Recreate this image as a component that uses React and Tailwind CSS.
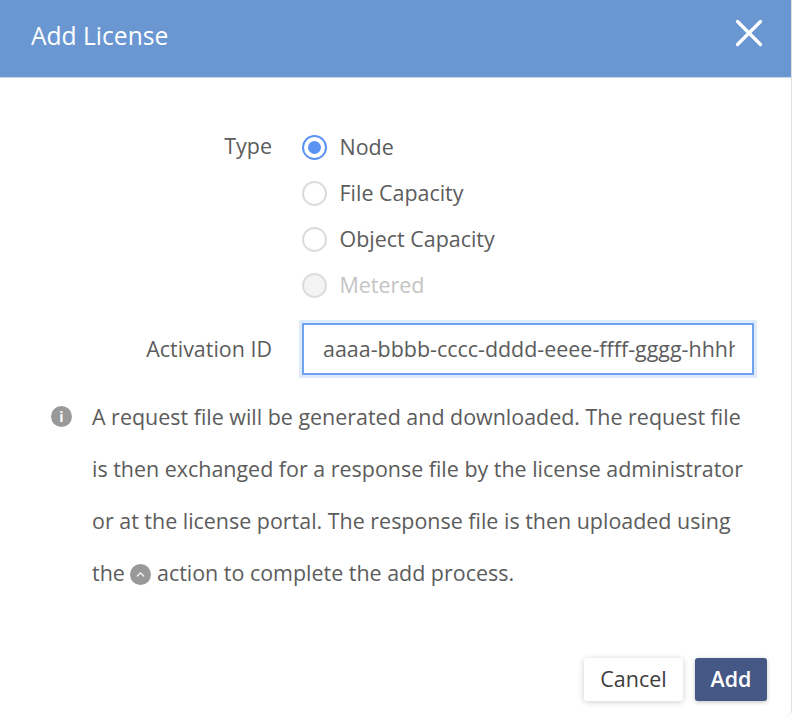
import { X, ChevronUp } from 'lucide-react';

const Radio = ({ label, checked = false, disabled = false }) => (
  <div className="flex h-[46px] items-center">
    <span
      className={`flex h-[25px] w-[25px] items-center justify-center rounded-full border-2 ${
        checked ? 'border-[#5b93f5]' : 'border-[#dcdcdc]'
      } ${disabled ? 'bg-[#f3f3f3]' : 'bg-white'}`}
    >
      {checked && <span className="h-[13px] w-[13px] rounded-full bg-[#5b93f5]" />}
    </span>
    <span className={`ml-[12.5px] ${disabled ? 'text-[#c4c4c4]' : 'text-[#5c5c5c]'}`}>{label}</span>
  </div>
);

const App = () => {
  return (
    <div className="flex h-[717px] w-[792px] flex-col overflow-hidden rounded-br-lg border-r border-[#e0e0e0] bg-white font-['Open_Sans',sans-serif] text-[21.45px] text-[#5c5c5c]">
      <header className="flex h-[78px] flex-none items-start justify-between border-b border-[#c9d6e8] bg-[#6a97d2] pl-[31px] pr-[19px] text-white">
        <h1 className="mt-[19px] text-[24.6px] font-normal leading-[34px]">Add License</h1>
        <X size={46} strokeWidth={1.7} className="mt-[10px]" />
      </header>

      <div className="flex pt-[46px]">
        <div className="w-[272px] pt-[6px] text-right leading-[32px]">Type</div>
        <div className="ml-[30px]">
          <Radio label="Node" checked />
          <Radio label="File Capacity" />
          <Radio label="Object Capacity" />
          <Radio label="Metered" disabled />
        </div>
      </div>

      <div className="mt-[15px] flex items-center">
        <label className="w-[272px] text-right">Activation ID</label>
        <div className="ml-[30px] h-[52px] w-[452px] overflow-hidden border-2 border-[#6fa2ef] pl-[19px] pr-[17px] shadow-[0_0_0_3px_#dfeafb]">
          <div className="overflow-hidden whitespace-nowrap leading-[48px]">aaaa-bbbb-cccc-dddd-eeee-ffff-gggg-hhhh</div>
        </div>
      </div>

      <div className="mt-[16px] flex pl-[51px]">
        <span className="mt-[15px] flex h-[21px] w-[21px] flex-none items-center justify-center rounded-full bg-[#999999] text-[14px] font-bold leading-none text-white">
          i
        </span>
        <p className="ml-[20px] whitespace-nowrap leading-[52px]">
          A request file will be generated and downloaded. The request file
          <br />
          is then exchanged for a response file by the license administrator
          <br />
          or at the license portal. The response file is then uploaded using
          <br />
          the{' '}
          <span className="inline-flex h-[21px] w-[21px] items-center justify-center rounded-full bg-[#999999] align-[0px] text-white">
            <ChevronUp size={13} strokeWidth={2.5} />
          </span>{' '}
          action to complete the add process.
        </p>
      </div>

      <div className="mt-auto flex justify-end gap-[12px] pb-[16px] pr-[24px]">
        <button className="h-[43px] w-[99px] rounded-[3px] bg-white font-medium text-[#3c3c3c] shadow-[0_1px_6px_rgba(0,0,0,0.2)]">
          Cancel
        </button>
        <button className="h-[43px] w-[72px] rounded-[3px] bg-[#445785] font-semibold text-white shadow-[0_1px_4px_rgba(0,0,0,0.25)]">
          Add
        </button>
      </div>
    </div>
  );
};

export default App;
